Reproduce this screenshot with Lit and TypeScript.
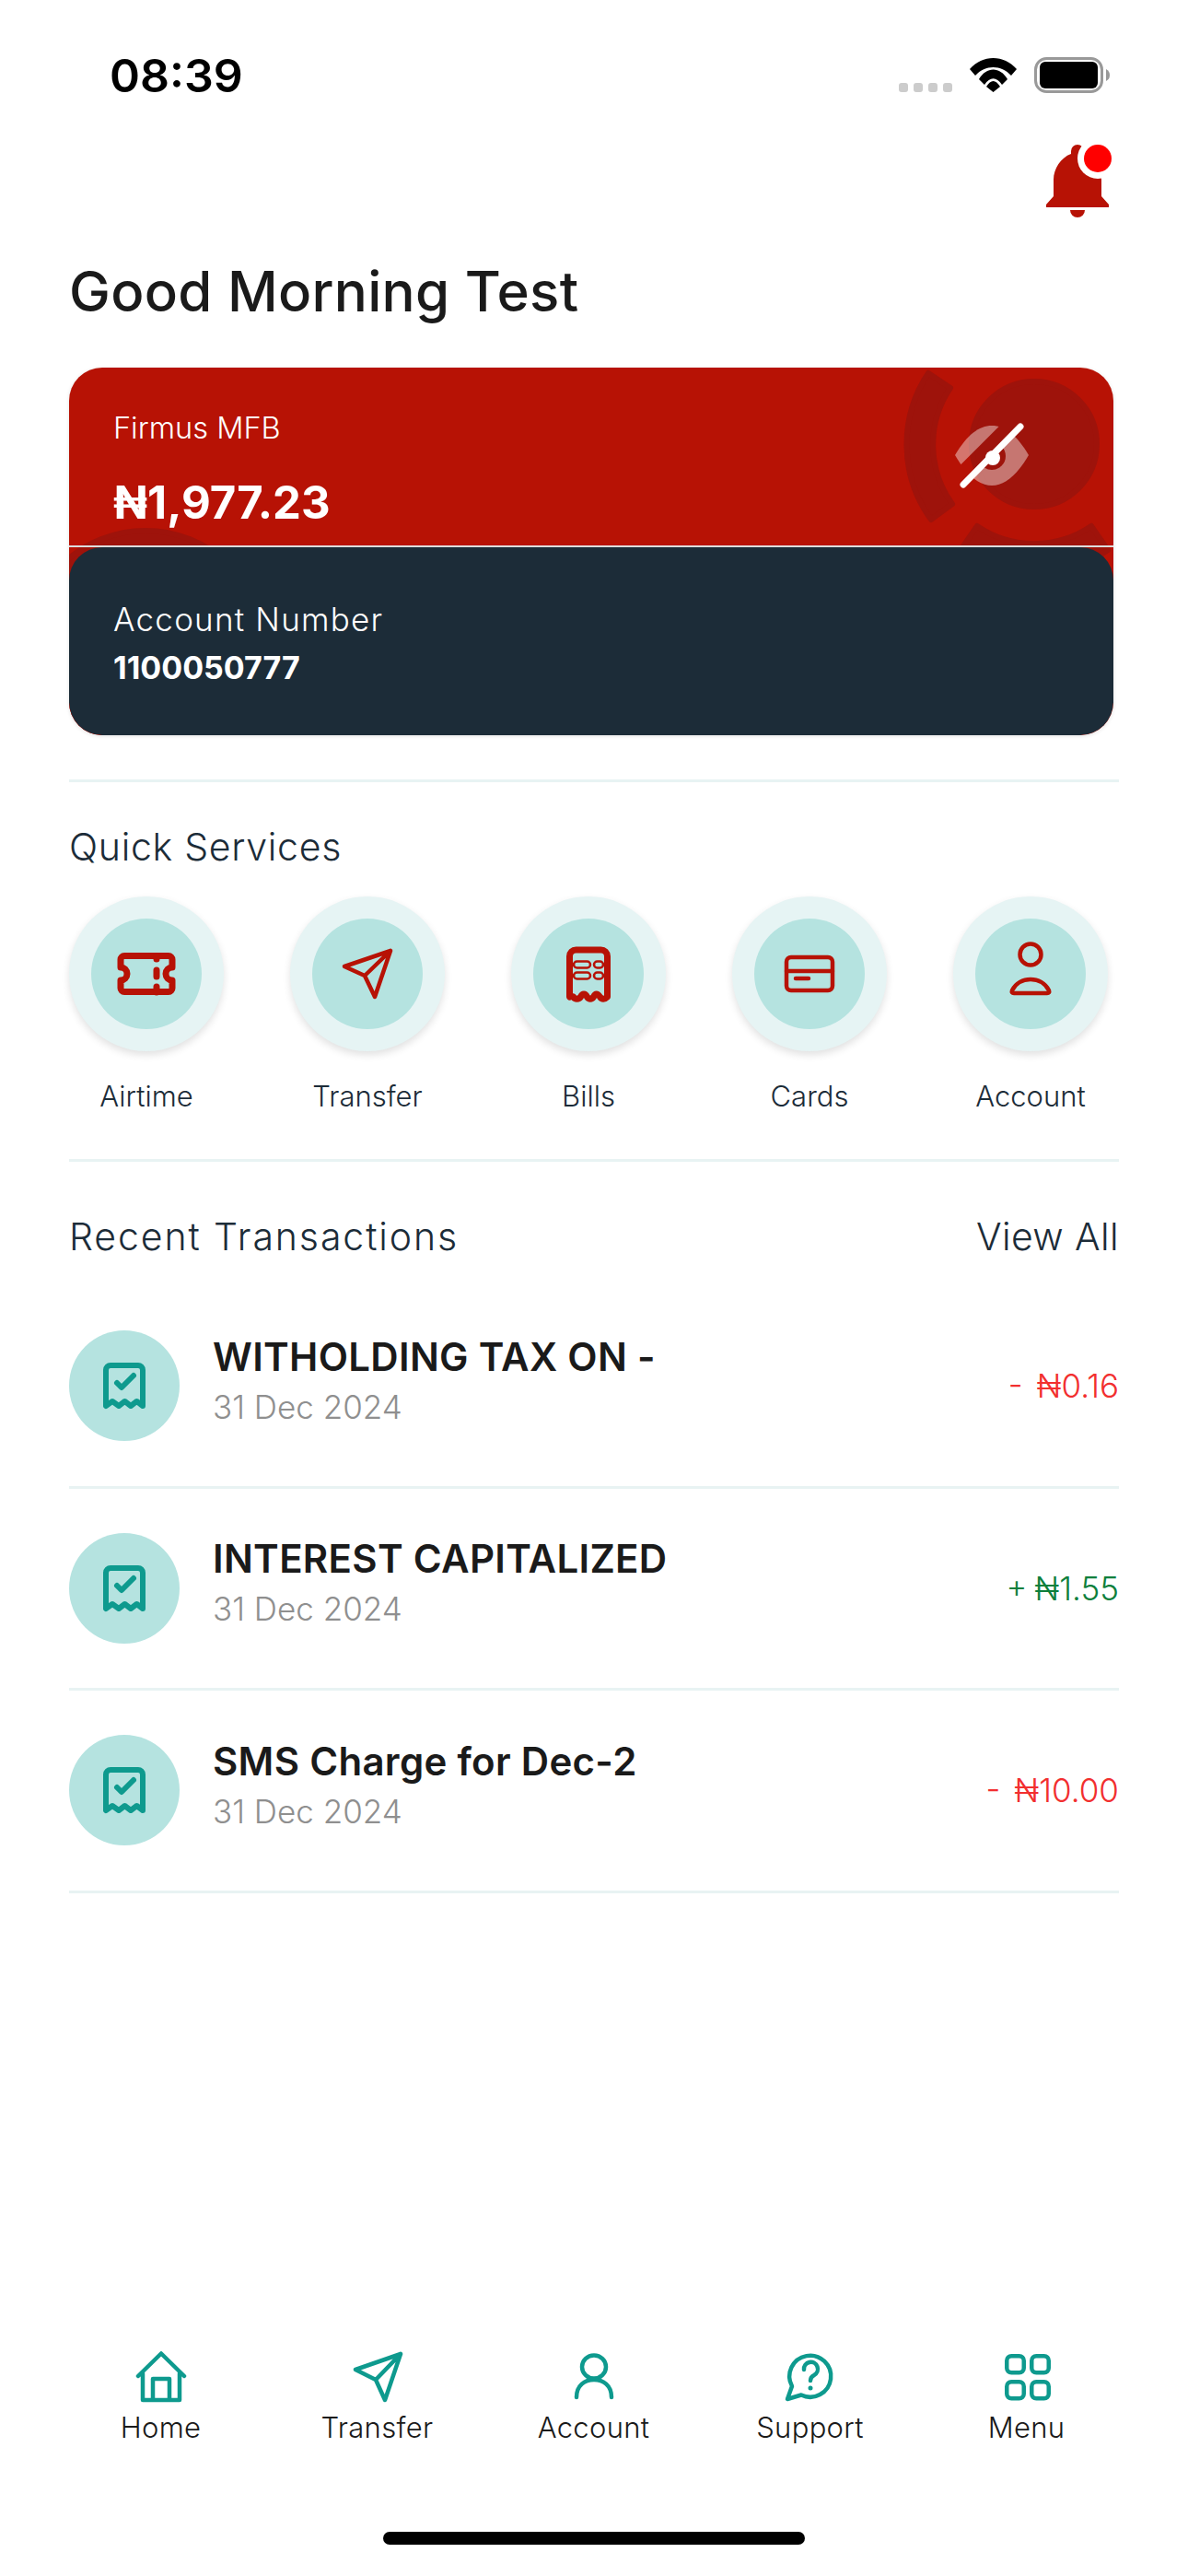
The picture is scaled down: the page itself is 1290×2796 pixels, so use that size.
import { LitElement, css, html, svg } from 'lit';
import { customElement } from 'lit/decorators.js';

const services = [
  {
    label: 'Airtime',
    icon: svg`<path class="thick" d="M36 40.500H84a4 4 0 0 1 4 4V53a7 7 0 0 0 0 14v8.500a4 4 0 0 1-4 4H36a4 4 0 0 1-4-4V67a7 7 0 0 0 0-14V44.500a4 4 0 0 1 4-4Z"/><path class="thick" d="M71 41v3M71 56v7M71 74v6"/>`,
  },
  {
    label: 'Transfer',
    icon: svg`<path class="mid" d="M85 35 35 52l22 10 11 23ZM85 35 57 62"/>`,
  },
  {
    label: 'Bills',
    icon: svg`<path class="thick" d="M39.500 85V41a7 7 0 0 1 7-7h27a7 7 0 0 1 7 7v44c-3 3-6 3-8 0-3-4-5-4-7 0-2 3-5 3-7 0-2-4-5-4-7 0-2 3-6 3-8 0-2-1-3-1-4 0Z"/><rect class="fine" x="44" y="46.500" width="18" height="7" rx="3.500"/><rect class="fine" x="66" y="46.500" width="10" height="7" rx="3.500"/><rect class="fine" x="44" y="58.500" width="18" height="7" rx="3.500"/><rect class="fine" x="66" y="58.500" width="10" height="7" rx="3.500"/>`,
  },
  {
    label: 'Cards',
    icon: svg`<rect class="mid" x="35" y="42" width="50" height="36" rx="5"/><path class="mid" d="M35 57h50M45 65h14"/>`,
  },
  {
    label: 'Account',
    icon: svg`<circle class="mid" cx="60" cy="39" r="11.500"/><path class="mid" d="M40 78c4-8 12-12 20-12s16 4 20 12q1 3-2 3H42q-3 0-2-3Z"/>`,
  },
];

const transactions = [
  { title: 'WITHOLDING TAX ON -', date: '31 Dec 2024', amount: '- ₦0.16', credit: false },
  { title: 'INTEREST CAPITALIZED', date: '31 Dec 2024', amount: '+ ₦1.55', credit: true },
  { title: 'SMS Charge for Dec-2', date: '31 Dec 2024', amount: '- ₦10.00', credit: false },
];

const tabs = [
  { label: 'Home', icon: svg`<path d="M5 27 30 2.500 55 27M10 24v29h40V24M21 53V30h18v23"/>` },
  { label: 'Transfer', icon: svg`<path d="M55 3 6 20l22 11 10 22ZM55 3 28 31"/>` },
  { label: 'Account', icon: svg`<ellipse cx="30" cy="17" rx="13" ry="12.500"/><path d="M11 50c0-13 9-19 19-19s19 6 19 19"/>` },
  {
    label: 'Support',
    icon: svg`<path d="M20 47.500a22.500 22.500 0 1 0-10-9.500L5 52Z"/><path d="M23 20a7.500 7.500 0 1 1 11 6q-4 2-4 6"/><circle class="dot" cx="30" cy="40" r="2.500"/>`,
  },
  {
    label: 'Menu',
    icon: svg`<rect x="8.250" y="5.250" width="18.500" height="18" rx="5"/><rect x="35.250" y="5.250" width="18.500" height="18" rx="5"/><rect x="8.250" y="33.250" width="18.500" height="18" rx="5"/><rect x="35.250" y="33.250" width="18.500" height="18" rx="5"/>`,
  },
];

@customElement('app-root')
export class AppRoot extends LitElement {
  static styles = css`
    :host {
      display: flex;
      flex-direction: column;
      height: 2796px;
      background: #fff;
      font-family: 'Inter', 'Noto Sans', sans-serif;
      color: #1c2c38;
      overflow: hidden;
    }

    .status {
      display: flex;
      justify-content: space-between;
      align-items: center;
      height: 40px;
      padding: 62px 84px 0 119px;
    }

    .time {
      font-size: 50px;
      line-height: 40px;
      font-weight: 600;
      color: #000;
    }

    .bell-row {
      display: flex;
      justify-content: flex-end;
      height: 79px;
      margin-top: 55px;
      padding-right: 82px;
    }

    .content {
      padding: 0 75px;
    }

    h1 {
      margin: 46px 0 0;
      font-size: 60px;
      line-height: 68px;
      font-weight: 500;
      letter-spacing: 0.300px;
      color: #1a1a1a;
    }

    .card {
      position: relative;
      width: 1134px;
      height: 399px;
      margin-top: 49px;
      border-radius: 36px;
      background: #b71205;
      overflow: hidden;
      box-shadow: 0 1px 4px rgba(0, 0, 0, 0.12);
    }

    .card-art {
      position: absolute;
      inset: 0;
    }

    .balance,
    .panel {
      position: relative;
      box-sizing: border-box;
      color: #fff;
      padding-left: 48px;
    }

    .balance {
      height: 193px;
      padding-top: 46px;
    }

    .bank {
      font-size: 32.500px;
      line-height: 40px;
      font-weight: 300;
    }

    .amount {
      margin-top: 36px;
      font-size: 49px;
      line-height: 50px;
      font-weight: 700;
    }

    .seam {
      position: relative;
      height: 2px;
      background: #ddd;
    }

    .panel {
      height: 204px;
      padding-top: 58px;
      background: #1c2c38;
      border-radius: 36px;
    }

    .panel-label {
      font-size: 35px;
      line-height: 40px;
      font-weight: 300;
      letter-spacing: 1.200px;
    }

    .panel-number {
      margin-top: 13px;
      font-size: 34px;
      line-height: 40px;
      font-weight: 700;
    }

    .rule {
      width: 1140px;
      height: 3px;
      background: #e8f3f3;
    }

    .rule.first {
      margin-top: 48px;
    }

    .rule.second {
      margin-top: 48px;
    }

    .heading {
      font-size: 41px;
      line-height: 50px;
      font-weight: 300;
      letter-spacing: 0.400px;
    }

    .quick-title {
      margin-top: 45px;
      letter-spacing: 0.700px;
    }

    .services {
      display: flex;
      gap: 72px;
      margin-top: 29px;
    }

    .service {
      display: flex;
      flex-direction: column;
      align-items: center;
      width: 168px;
    }

    .halo {
      display: flex;
      align-items: center;
      justify-content: center;
      width: 168px;
      height: 168px;
      border-radius: 50%;
      background: #e6f4f4;
      box-shadow: 0 4px 8px rgba(0, 0, 0, 0.12);
    }

    .disc {
      flex: none;
      width: 120px;
      height: 120px;
      border-radius: 50%;
      background: #b5e3e0;
    }

    .disc svg {
      display: block;
      fill: none;
      stroke: #b71205;
      stroke-linecap: round;
      stroke-linejoin: round;
    }

    .thick {
      stroke-width: 7;
    }

    .mid {
      stroke-width: 4.500;
    }

    .fine {
      stroke-width: 2.500;
    }

    .service-label {
      margin-top: 29px;
      font-size: 31px;
      line-height: 40px;
      font-weight: 300;
      white-space: nowrap;
    }

    .recent-head {
      display: flex;
      justify-content: space-between;
      width: 1140px;
      margin-top: 56px;
    }

    .recent-title {
      letter-spacing: 1.900px;
    }

    .list {
      width: 1140px;
      margin-top: 29px;
    }

    .row {
      display: flex;
      align-items: center;
      box-sizing: border-box;
      height: 219.500px;
      border-bottom: 3px solid #e8f3f3;
    }

    .row .disc svg {
      stroke: #0e9a8e;
      stroke-width: 6;
    }

    .row-text {
      flex: 1;
      margin-left: 36px;
      padding-bottom: 12px;
    }

    .row-title {
      font-size: 42px;
      line-height: 50px;
      font-weight: 600;
      letter-spacing: 0.300px;
      color: #1a1a1a;
    }

    .row-date {
      margin-top: 7px;
      font-size: 35px;
      line-height: 44px;
      font-weight: 300;
      color: #8f8f8f;
    }

    .row-amount {
      font-size: 35px;
      font-weight: 300;
      word-spacing: 5px;
      color: #f22f2f;
    }

    .row-amount.credit {
      word-spacing: -2px;
      color: #0d7f3c;
    }

    .tabs {
      display: flex;
      margin-top: auto;
      padding-left: 57px;
    }

    .tab {
      display: flex;
      flex-direction: column;
      align-items: center;
      width: 235px;
      font-size: 31px;
      line-height: 40px;
      font-weight: 300;
      letter-spacing: 0.300px;
      color: #1a1a1a;
    }

    .tab svg {
      display: block;
      margin-bottom: 7px;
      fill: none;
      stroke: #0e9a8e;
      stroke-width: 4.500;
      stroke-linecap: round;
      stroke-linejoin: round;
    }

    .tab .dot {
      fill: #0e9a8e;
      stroke: none;
    }

    .home-bar {
      align-self: center;
      width: 458px;
      height: 14px;
      margin: 93px 0 34px;
      border-radius: 7px;
      background: #000;
    }
  `;

  private renderStatusIcons() {
    return html`<svg width="230" height="40" viewBox="0 0 230 40">
      <g fill="#ccc">
        <rect x="0" y="28" width="10" height="10" rx="3" />
        <rect x="16" y="28" width="10" height="10" rx="3" />
        <rect x="32" y="28" width="10" height="10" rx="3" />
        <rect x="48" y="28" width="10" height="10" rx="3" />
      </g>
      <path
        d="M77 13C91-3 114-3 128 13l-6 7C111 8 94 8 83 20ZM87 24c8-14 23-14 31 0l-6 6c-6-9-13-9-19 0ZM95 32c5-8 10-8 15 0l-7.500 6Z"
      />
      <rect x="148.500" y="1.500" width="72" height="36" rx="12" fill="none" stroke="#999" stroke-width="3" />
      <rect x="153" y="5" width="63" height="29" rx="6" />
      <path d="M225 13q4 2 4 6.500t-4 6.500Z" fill="#999" />
    </svg>`;
  }

  private renderBell() {
    return html`<svg width="72" height="79" viewBox="0 0 72 79">
      <path
        fill="#b71205"
        d="M34 0a7 7 0 0 0-7 7v3C16 14 8 26 8 38v18L0 65v3h68v-3l-8-9V38C60 26 52 14 41 10V7a7 7 0 0 0-7-7ZM26 71h16a8 8 0 0 1-16 0Z"
      />
      <circle cx="56" cy="15" r="22" fill="#fff" />
      <circle cx="56" cy="15" r="15" fill="#f00" />
    </svg>`;
  }

  private renderCardArt() {
    return html`<svg class="card-art" width="1134" height="399" viewBox="0 0 1134 399">
      <defs>
        <mask id="eye-cut" maskUnits="userSpaceOnUse" x="950" y="50" width="110" height="90">
          <rect x="950" y="50" width="110" height="90" fill="#fff" />
          <circle cx="1002" cy="96" r="15" fill="#000" />
          <path d="M965 122 1028 59" stroke="#000" stroke-width="19" />
        </mask>
      </defs>
      <g fill="#9e130b" stroke="#9e130b" stroke-width="6" stroke-linejoin="round">
        <circle cx="1048" cy="83" r="68" />
        <path d="M933 6A139 139 0 0 0 936 165L959 148A110 110 0 0 1 957 22Z" />
        <path d="M986 172A110 110 0 0 0 1110 172L1128 198A139 139 0 0 1 968 198Z" />
        <circle cx="83" cy="307" r="130" />
      </g>
      <path
        mask="url(#eye-cut)"
        fill="#fff"
        fill-opacity="0.42"
        d="M962 95C975 73 988 63 1002 63s27 10 40 32c-13 22-26 33-40 33s-27-11-40-33Z"
      />
      <circle cx="1003" cy="98" r="8" fill="#fff" />
      <path d="M971 127 1033 64" stroke="#fff" stroke-width="7" stroke-linecap="round" />
    </svg>`;
  }

  render() {
    return html`
      <div class="status">
        <span class="time">08:39</span>
        ${this.renderStatusIcons()}
      </div>
      <div class="bell-row">${this.renderBell()}</div>

      <div class="content">
        <h1>Good Morning Test</h1>

        <div class="card">
          ${this.renderCardArt()}
          <div class="balance">
            <div class="bank">Firmus MFB</div>
            <div class="amount">₦1,977.23</div>
          </div>
          <div class="seam"></div>
          <div class="panel">
            <div class="panel-label">Account Number</div>
            <div class="panel-number">1100050777</div>
          </div>
        </div>

        <div class="rule first"></div>
        <div class="heading quick-title">Quick Services</div>
        <div class="services">
          ${services.map(
            (s) => html`<div class="service">
              <div class="halo">
                <div class="disc"><svg width="120" height="120" viewBox="0 0 120 120">${s.icon}</svg></div>
              </div>
              <div class="service-label">${s.label}</div>
            </div>`,
          )}
        </div>
        <div class="rule second"></div>

        <div class="recent-head heading">
          <span class="recent-title">Recent Transactions</span>
          <span>View All</span>
        </div>
        <div class="list">
          ${transactions.map(
            (t) => html`<div class="row">
              <div class="disc">
                <svg width="120" height="120" viewBox="0 0 120 120">
                  <path
                    d="M40 82V43a5 5 0 0 1 5-5h30a5 5 0 0 1 5 5v39l-6.500-5-6.500 5-6.500-5-6.500 5-7-5-7 5Z"
                  />
                  <path d="M52 57l5 5 13-13" />
                </svg>
              </div>
              <div class="row-text">
                <div class="row-title">${t.title}</div>
                <div class="row-date">${t.date}</div>
              </div>
              <div class="row-amount ${t.credit ? 'credit' : ''}">${t.amount}</div>
            </div>`,
          )}
        </div>
      </div>

      <div class="tabs">
        ${tabs.map(
          (t) => html`<div class="tab">
            <svg width="60" height="56" viewBox="0 0 60 56">${t.icon}</svg>
            <span>${t.label}</span>
          </div>`,
        )}
      </div>
      <div class="home-bar"></div>
    `;
  }
}
